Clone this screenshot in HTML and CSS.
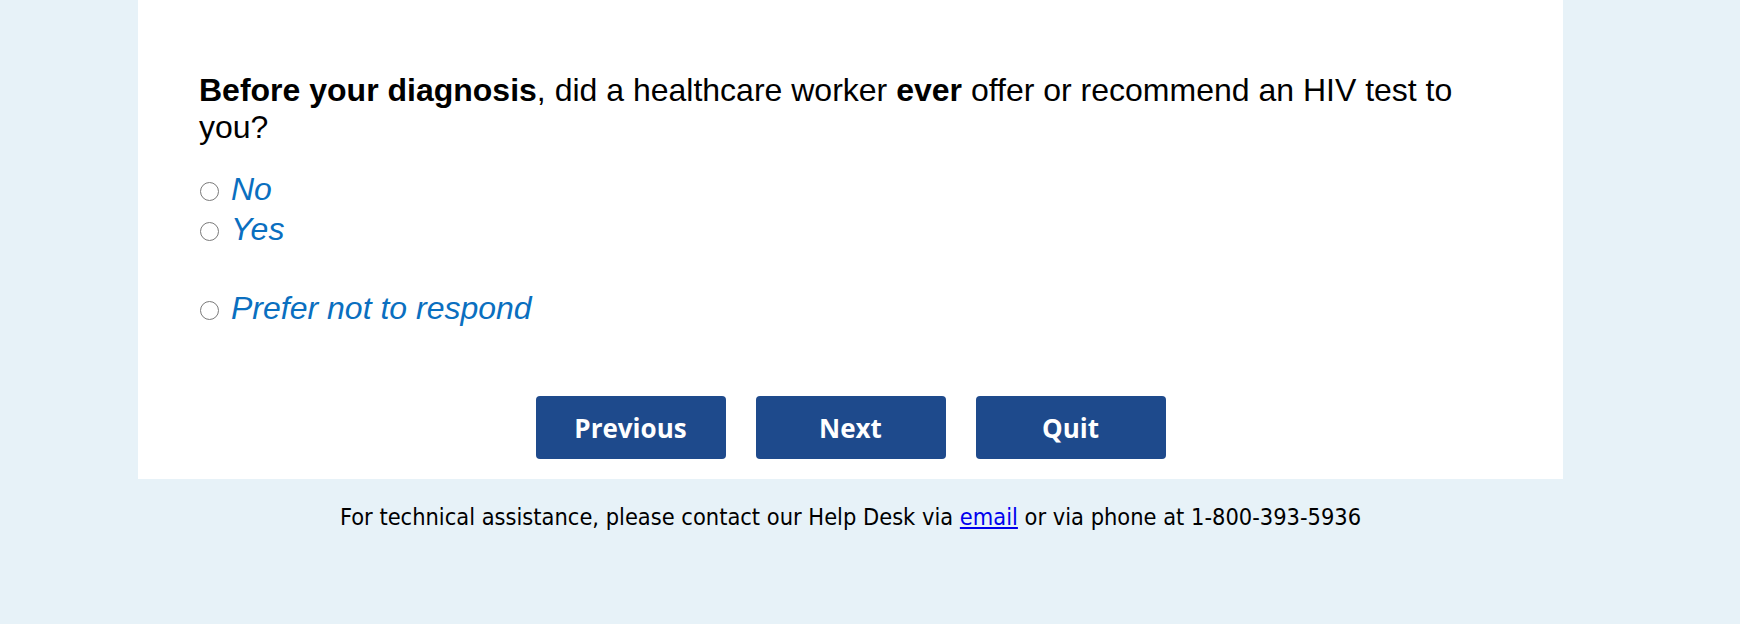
FILE: index.html
```html
<!DOCTYPE html>
<html>
<head>
<meta charset="utf-8">
<link rel="stylesheet" href="styles.css">
</head>
<body>
<div class="wrap">
  <main class="panel">
    <p class="question"><b>Before your diagnosis</b>, did a healthcare worker <b>ever</b> offer or recommend an HIV test to you?</p>
    <div class="options">
      <label class="option"><input type="radio" name="q" class="radio"><span class="opt-text">No</span></label>
      <label class="option"><input type="radio" name="q" class="radio"><span class="opt-text">Yes</span></label>
      <label class="option option-sep"><input type="radio" name="q" class="radio"><span class="opt-text">Prefer not to respond</span></label>
    </div>
    <div class="buttons">
      <button class="btn" type="button">Previous</button>
      <button class="btn" type="button">Next</button>
      <button class="btn" type="button">Quit</button>
    </div>
  </main>
  <footer class="footer">For technical assistance, please contact our Help Desk via <a href="#" class="link">email</a> or via phone at 1-800-393-5936</footer>
</div>
</body>
</html>
```

FILE: styles.css
```css
html, body {
  margin: 0;
  padding: 0;
  background: #e7f2f8;
}
.wrap {
  margin-left: 138px;
  width: 1425px;
}
.panel {
  display: block;
  background: #ffffff;
  padding: 72px 61px 20px 61px;
}
.question {
  margin: 0;
  font-family: "Liberation Sans", Arial, sans-serif;
  font-size: 32px;
  line-height: 37px;
  color: #000;
}
.options {
  display: flex;
  flex-direction: column;
  margin-top: 23px;
}
.option {
  display: flex;
  align-items: center;
  height: 40px;
  font-family: "Liberation Sans", Arial, sans-serif;
  font-style: italic;
  font-size: 32px;
  color: #0a6fc0;
}
.option-sep {
  margin-top: 39px;
}
.radio {
  appearance: none;
  -webkit-appearance: none;
  width: 19px;
  height: 19px;
  margin: 0 12px 0 1px;
  border: 1.5px solid #7a7a7a;
  border-radius: 50%;
  box-sizing: border-box;
  background: #fff;
  flex: none;
  position: relative;
  top: 2px;
}
.buttons {
  display: flex;
  justify-content: center;
  gap: 30px;
  margin-top: 68px;
}
.btn {
  width: 190px;
  height: 63px;
  border: none;
  border-radius: 4px;
  background: #1e4a8c;
  color: #ffffff;
  font-family: "Open Sans", sans-serif;
  font-weight: 700;
  font-size: 26px;
  padding: 0;
  cursor: pointer;
}
.footer {
  text-align: center;
  font-family: "DejaVu Sans Condensed", "DejaVu Sans", sans-serif;
  font-size: 23.4px;
  line-height: 30px;
  padding-top: 23px;
  color: #000;
}
.link {
  color: #0000ee;
}
```
